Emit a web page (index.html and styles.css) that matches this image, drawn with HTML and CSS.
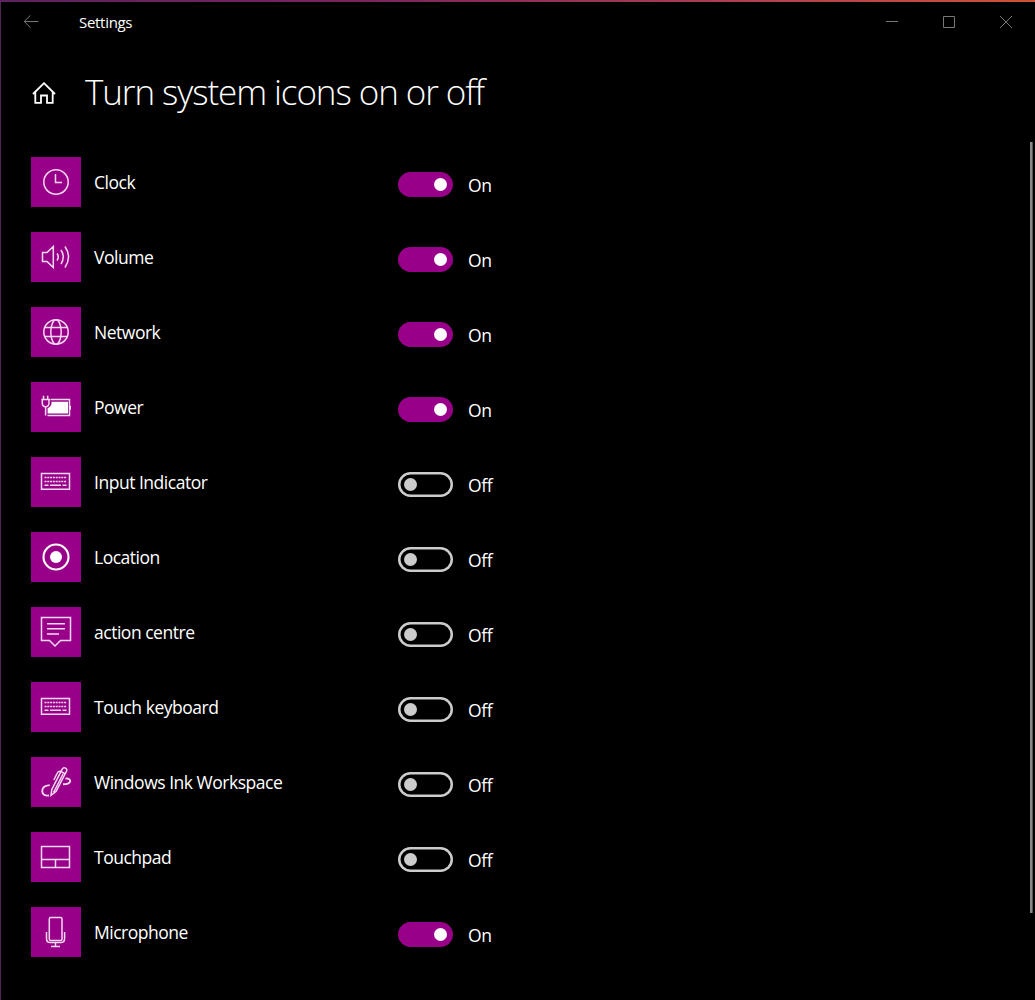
FILE: index.html
```
<!DOCTYPE html>
<html lang="en-GB">
<head>
<meta charset="utf-8">
<title>Settings</title>
<link rel="stylesheet" href="styles.css">
</head>
<body>
<div class="window">
  <header class="titlebar">
    <svg class="back" width="16" height="14" viewBox="0 0 16 14"><path d="M15.5 6.5H1M7.5 .3L1.2 6.5 7.5 12.7"/></svg>
    <span class="app-name">Settings</span>
    <div class="controls">
      <svg width="12" height="12" viewBox="0 0 12 12"><path d="M0 5.5H12"/></svg>
      <svg width="12" height="12" viewBox="0 0 12 12"><path d="M.5 .5H11.5V11.5H.5Z"/></svg>
      <svg width="12" height="12" viewBox="0 0 12 12"><path d="M0 0L12 12M12 0L0 12"/></svg>
    </div>
  </header>
  <div class="heading">
    <svg class="home" width="24" height="22" viewBox="0 0 24 22"><path d="M1 12L12 1.2 23 12M3.3 10V20.8H9V13.5H15V20.8H20.7V10"/></svg>
    <h1>Turn system icons on or off</h1>
  </div>
  <div class="content">
    <main class="list">
      <div class="row"><svg class="tile" viewBox="0 0 50 50"><circle cx="25" cy="25" r="12.2"/><path d="M24.5 17V25.5H31"/></svg><span class="name">Clock</span><span class="toggle on"></span><span class="state">On</span></div>
      <div class="row"><svg class="tile" viewBox="0 0 50 50"><path d="M11.5 20.5H16L22.3 14.5V35.5L16 29.5H11.5Z"/><path d="M26 21.5Q28.5 25 26 28.5M30 18Q34.5 25 30 32M34 14.5Q41 25 34 35.5"/></svg><span class="name">Volume</span><span class="toggle on"></span><span class="state">On</span></div>
      <div class="row"><svg class="tile" viewBox="0 0 50 50"><circle cx="25" cy="25" r="12.2"/><ellipse cx="25" cy="25" rx="5.2" ry="12.2"/><path d="M13.5 20.5H36.5M13.5 29.5H36.5"/></svg><span class="name">Network</span><span class="toggle on"></span><span class="state">On</span></div>
      <div class="row"><svg class="tile" viewBox="0 0 50 50"><path d="M19.5 17.5H38.5V33.5H16.5M12.5 13.8V17.5M16.7 13.8V17.5M10.3 17.5H19M11.3 17.5V21Q11.3 24.7 14.6 24.7T18 21V17.5M14.6 24.5V33.5"/><path class="solid" d="M20.5 19.8H37V31.5H16.6V26.3Q20.5 24.5 20.5 21ZM38.5 24H40V27.5H38.5Z"/></svg><span class="name">Power</span><span class="toggle on"></span><span class="state">On</span></div>
      <div class="row"><svg class="tile" viewBox="0 0 50 50"><path d="M10.5 16.5H38.5V32.3H10.5Z"/><path class="keys" d="M13.5 20.5H35.5M13.5 24.4H35.5"/><path d="M13.5 28.3H17.5M19 28.3H30M31.5 28.3H35.5"/></svg><span class="name">Input Indicator</span><span class="toggle"></span><span class="state">Off</span></div>
      <div class="row"><svg class="tile" viewBox="0 0 50 50"><circle class="ring" cx="25" cy="25" r="12.5"/><circle class="solid" cx="25" cy="25" r="6"/></svg><span class="name">Location</span><span class="toggle"></span><span class="state">Off</span></div>
      <div class="row"><svg class="tile" viewBox="0 0 50 50"><path d="M10.5 10.5H39.5V33.5H29.5L24 39 18.5 33.5H10.5ZM16 16.7H34M16 21.8H34M16 26.9H28"/></svg><span class="name">action centre</span><span class="toggle"></span><span class="state">Off</span></div>
      <div class="row"><svg class="tile" viewBox="0 0 50 50"><path d="M10.5 16.5H38.5V32.3H10.5Z"/><path class="keys" d="M13.5 20.5H35.5M13.5 24.4H35.5"/><path d="M13.5 28.3H17.5M19 28.3H30M31.5 28.3H35.5"/></svg><span class="name">Touch keyboard</span><span class="toggle"></span><span class="state">Off</span></div>
      <div class="row"><svg class="tile" viewBox="0 0 50 50"><path d="M20 38.3L20.8 32.5 30.8 12.8Q32.5 9.8 34.6 11.2T35.2 14.8L25 34.5Z M30 14.7L34.5 17M32 17L22.5 35.5M30 14.2Q27.3 13.8 26.3 16L22.8 23"/><path class="ribbon" d="M18.7 28.1Q11.2 28.8 11.2 34 11.5 39.2 18 38.5M34.5 21.6Q39.2 21.2 39.2 24.1 38.8 27.2 32 27.3"/></svg><span class="name">Windows Ink Workspace</span><span class="toggle"></span><span class="state">Off</span></div>
      <div class="row"><svg class="tile" viewBox="0 0 50 50"><path d="M10.5 14.5H38.5V35.5H10.5ZM10.5 27.5H38.5M24.5 27.5V35.5"/></svg><span class="name">Touchpad</span><span class="toggle"></span><span class="state">Off</span></div>
      <div class="row"><svg class="tile" viewBox="0 0 50 50"><rect x="18.3" y="10.5" width="12.7" height="23" rx="1.5"/><path d="M15.5 25V31.5Q15.5 35.6 19.5 35.6H29.5Q33.6 35.6 33.6 31.5V25M24.5 35.6V39.5M20 39.5H29"/></svg><span class="name">Microphone</span><span class="toggle on"></span><span class="state">On</span></div>
    </main>
    <div class="scrollbar"></div>
  </div>
</div>
</body>
</html>
```
FILE: styles.css
```
* { box-sizing: border-box; }
body {
  margin: 0;
  height: 1000px;
  padding: 2px 0 0 1px;
  overflow: hidden;
  background: linear-gradient(90deg, #5e2060, #7c2460 35%, #b04450 75%, #cc5333) 0 0 / 100% 2px no-repeat, #502650;
  color: #fff;
  font-family: "Open Sans", "Noto Sans", sans-serif;
}
.window { height: 998px; background: #000; }
svg { display: block; fill: none; stroke: #fff; }
.titlebar { display: flex; height: 40px; align-items: center; padding: 0 23px 0 22px; }
.back { stroke: #777; }
.app-name { margin-left: 40px; font-size: 15px; line-height: 20px; letter-spacing: -0.3px; }
.controls { display: flex; gap: 45px; margin-left: auto; }
.controls svg { stroke: #777; }
.heading { display: flex; align-items: center; height: 100px; padding-left: 31px; }
.home { margin-top: 2px; stroke-width: 1.8; }
h1 { margin: 0 0 1px 29px; font-size: 35px; font-weight: 330; line-height: 48px; letter-spacing: -1.08px; white-space: nowrap; }
.content { display: flex; justify-content: space-between; }
.list { display: flex; flex-direction: column; gap: 25px; padding: 15px 0 0 30px; }
.row { display: grid; grid-template-columns: 50px 317px 55px auto; align-items: center; height: 50px; }
.tile { width: 50px; height: 50px; background: #990089; stroke: #f5d9f2; stroke-width: 1.5; }
.solid { fill: #fff; stroke: none; }
.keys { stroke-dasharray: 2 .8; }
.ring { stroke-width: 2.1; stroke: #fff; }
.ribbon { stroke-width: 1.9; }
.name { padding-left: 13px; font-size: 17.5px; line-height: 24px; letter-spacing: -0.48px; }
.toggle { display: flex; align-items: center; width: 55px; height: 25px; margin-top: 5px; border-radius: 13px; padding: 0 6px; box-shadow: inset 0 0 0 2.5px #ccc; }
.toggle::before { content: ""; width: 13px; height: 13px; border-radius: 50%; background: #ccc; }
.toggle.on { justify-content: flex-end; background: #990089; box-shadow: none; }
.toggle.on::before { background: #fff; }
.state { padding: 6px 0 0 15px; font-size: 17.5px; line-height: 24px; letter-spacing: -0.4px; }
.scrollbar { width: 3px; height: 771px; margin-right: 2px; background: linear-gradient(90deg, #888 67%, #555 67%); }
```
